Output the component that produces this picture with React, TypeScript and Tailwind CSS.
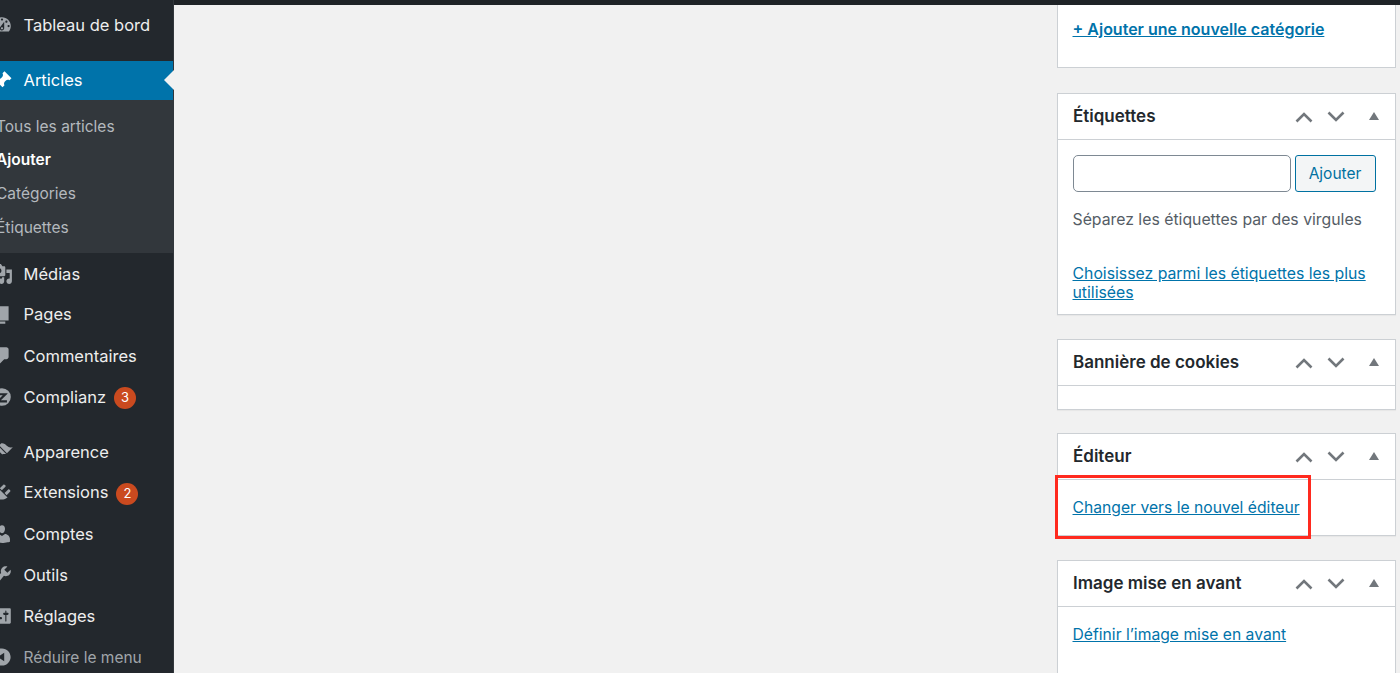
const ICONS: Record<string, string> = {
  dashboard: "M3.76 16h12.48c1.1-1.37 1.76-3.11 1.76-5 0-4.42-3.58-8-8-8s-8 3.58-8 8c0 1.89.66 3.63 1.76 5zM10 4c.55 0 1 .45 1 1s-.45 1-1 1-1-.45-1-1 .45-1 1-1zM6 6c.55 0 1 .45 1 1s-.45 1-1 1-1-.45-1-1 .45-1 1-1zm8 0c.55 0 1 .45 1 1s-.45 1-1 1-1-.45-1-1 .45-1 1-1zm-5.37 5.55L12 7v6c0 1.1-.9 2-2 2s-2-.9-2-2c0-.57.24-1.08.63-1.45zM4 10c.55 0 1 .45 1 1s-.45 1-1 1-1-.45-1-1 .45-1 1-1zm12 0c.55 0 1 .45 1 1s-.45 1-1 1-1-.45-1-1 .45-1 1-1zm-5 3c0-.55-.45-1-1-1s-1 .45-1 1 .45 1 1 1 1-.45 1-1z",
  post: "M10.44 3.02l1.82-1.82 6.36 6.35-1.83 1.82c-1.05-.68-2.48-.57-3.41.36l-.75.75c-.92.93-1.04 2.35-.35 3.41l-1.83 1.82-2.41-2.41-2.8 2.79c-.42.42-3.38 2.71-3.8 2.29s1.86-3.39 2.28-3.81l2.79-2.79L4.1 9.36l1.83-1.82c1.05.69 2.48.57 3.4-.36l.75-.75c.93-.92 1.05-2.35.36-3.41z",
  media: "M13 11V4c0-.55-.45-1-1-1h-1.67L9 1H5L3.67 3H2c-.55 0-1 .45-1 1v7c0 .55.45 1 1 1h10c.55 0 1-.45 1-1zM7 4.5c1.38 0 2.5 1.12 2.5 2.5S8.38 9.5 7 9.5 4.5 8.38 4.5 7 5.62 4.5 7 4.5zM14 6h5v10.5c0 1.38-1.12 2.5-2.5 2.5S14 17.88 14 16.5s1.12-2.5 2.5-2.5c.17 0 .34.02.5.05V9h-3V6zm-4 8.05V13h2v3.5c0 1.38-1.12 2.5-2.5 2.5S7 17.88 7 16.5 8.12 14 9.5 14c.17 0 .34.02.5.05z",
  page: "M6 15V2h10v13H6zm-1 1h8v2H3V5h2v11z",
  comments: "M5 2h9c1.1 0 2 .9 2 2v7c0 1.1-.9 2-2 2h-2l-5 5v-5H5c-1.1 0-2-.9-2-2V4c0-1.1.9-2 2-2z",
  complianz: "M10 2a8 8 0 1 1 0 16a8 8 0 0 1 0-16zM5.5 6.5v2h5.2l-5.2 5v1.5h9v-2H9l6-6v-.5z",
  appearance: "M14.48 11.06L7.41 3.99l1.5-1.5c.5-.56 2.3-.47 3.51.32 1.21.8 1.43 1.28 2.91 2.1 1.18.64 2.45 1.26 4.45.85zm-.71.71L6.7 4.7 4.93 6.47c-.39.39-.39 1.02 0 1.41l1.06 1.06c.39.39.39 1.03 0 1.42-.6.6-1.43 1.11-2.21 1.69-.35.26-.7.53-1.01.84C1.43 13.23.91 14.75 1.4 15.24c.49.49 2.02-.02 3.36-1.36.31-.31.58-.66.84-1.01.58-.78 1.09-1.61 1.69-2.21.39-.39 1.02-.39 1.41 0l1.06 1.06c.39.39 1.02.39 1.41 0z",
  plugins: "M13.11 4.36L9.87 7.6 8 5.73l3.24-3.24c.35-.34 1.05-.2 1.56.32.52.51.66 1.21.31 1.55zm-8 1.77l.91-1.12 9.01 9.01-1.19.84c-.71.71-2.63 1.16-3.82 1.16H6.14L4.9 17.26c-.59.59-1.54.59-2.12 0-.59-.58-.59-1.53 0-2.12l1.24-1.24v-3.88c0-1.13.4-3.19 1.09-3.89zm7.26 3.97l3.24-3.24c.34-.35 1.04-.21 1.55.31.52.51.66 1.21.31 1.55l-3.24 3.25z",
  users: "M10 9.25c-2.27 0-2.73-3.44-2.73-3.44C7 4.02 7.82 2 9.97 2c2.16 0 2.98 2.02 2.71 3.81 0 0-.41 3.44-2.68 3.44zm0 2.57L12.72 10c2.39 0 4.52 2.33 4.52 4.53v2.49s-3.65 1.13-7.24 1.13c-3.65 0-7.24-1.13-7.24-1.13v-2.49c0-2.25 1.94-4.48 4.47-4.48z",
  tools: "M16.68 9.77c-1.34 1.34-3.3 1.67-4.95.99l-5.41 6.52c-.99.99-2.59.99-3.58 0s-.99-2.59 0-3.57l6.52-5.42c-.68-1.65-.35-3.61.99-4.95 1.28-1.28 3.12-1.62 4.72-1.06l-2.89 2.89 2.82 2.82 2.86-2.87c.53 1.58.18 3.39-1.08 4.67zM3.81 16.21c.4.39 1.04.39 1.43 0 .4-.4.4-1.04 0-1.43-.39-.4-1.03-.4-1.43 0-.39.39-.39 1.03 0 1.43z",
  settings: "M18 16V4c0-.55-.45-1-1-1H3c-.55 0-1 .45-1 1v12c0 .55.45 1 1 1h14c.55 0 1-.45 1-1zM8 11h1c.55 0 1 .45 1 1s-.45 1-1 1H8v1.5c0 .28-.22.5-.5.5s-.5-.22-.5-.5V13H6c-.55 0-1-.45-1-1s.45-1 1-1h1V5.5c0-.28.22-.5.5-.5s.5.22.5.5V11zm5-2h-1c-.55 0-1-.45-1-1s.45-1 1-1h1V5.5c0-.28.22-.5.5-.5s.5.22.5.5V7h1c.55 0 1 .45 1 1s-.45 1-1 1h-1v5.5c0 .28-.22.5-.5.5s-.5-.22-.5-.5V9z",
  collapse: "M10 2.16c4.33 0 7.84 3.51 7.84 7.84s-3.51 7.84-7.84 7.84S2.16 14.33 2.16 10 5.71 2.16 10 2.16zm2 11.72V6.12L6.18 9.97z",
};

function Icon({ name }: { name: string }) {
  return (
    <svg viewBox="0 0 20 20" className="w-[22px] h-[22px] -ml-[9px] mr-[10.5px] shrink-0" fill="currentColor" fillRule="evenodd">
      <path d={ICONS[name]} />
    </svg>
  );
}

function Row({ icon, label, badge, extra = "", labelExtra = "" }: { icon: string; label: string; badge?: string; extra?: string; labelExtra?: string }) {
  return (
    <div className={`h-[40px] flex items-center text-[#a0a5aa] ${extra}`}>
      <Icon name={icon} />
      <span className={`text-[#eeeeee] text-[16.5px] ${labelExtra}`}>{label}</span>
      {badge && (
        <span className="ml-[8px] mt-[2px] w-[22px] h-[22px] rounded-full bg-[#ca4a1f] text-white text-[13px] flex items-center justify-center">
          {badge}
        </span>
      )}
    </div>
  );
}

function Controls() {
  return (
    <div className="flex items-center mt-[2px]">
      <svg viewBox="0 0 18 12" className="w-[18px] h-[12px] mr-[14px]" fill="none" stroke="#72777c" strokeWidth="2.6">
        <path d="M1.5 10.5 9 3l7.5 7.5" />
      </svg>
      <svg viewBox="0 0 18 12" className="w-[18px] h-[12px] mr-[24.5px]" fill="none" stroke="#72777c" strokeWidth="2.6">
        <path d="M1.5 1.5 9 9l7.5-7.5" />
      </svg>
      <svg viewBox="0 0 10 8" className="w-[10px] h-[8px] -mt-[3px]" fill="#72777c">
        <path d="M5 0l5 8H0z" />
      </svg>
    </div>
  );
}

function Box({ title, bodyClass, children, className = "" }: { title: string; bodyClass?: string; children?: React.ReactNode; className?: string }) {
  return (
    <section className={`bg-white border border-[#ccd0d4] shadow-[0_1px_1px_rgba(0,0,0,0.04)] ${className}`}>
      <header className="h-[45.5px] border-b border-[#ccd0d4] pl-[15px] pr-[16px] flex items-center justify-between">
        <h2 className="text-[17px] font-semibold text-[#23282d]">{title}</h2>
        <Controls />
      </header>
      <div className={bodyClass}>{children}</div>
    </section>
  );
}

const linkCls = "text-[#0073aa] underline text-[15.7px] leading-[18px]";

export default function App() {
  return (
    <div className="h-[673px] w-[1400px] flex overflow-hidden bg-[#f1f1f1] font-['Inter','Liberation_Sans',sans-serif]">
      <aside className="w-[174px] h-full shrink-0 bg-[#23282d] overflow-hidden border-r border-[#32373c]">
        <div className="h-[50px] flex items-center text-[#a0a5aa]">
          <Icon name="dashboard" />
          <span className="text-[#eeeeee] text-[16.5px]">Tableau de bord</span>
        </div>
        <div className="mt-[11px] h-[39px] bg-[#0073aa] flex items-center text-white">
          <Icon name="post" />
          <span className="text-[16.5px] -mt-[1px]">Articles</span>
        </div>
        <div className="bg-[#32373c] h-[153px] pt-[9px] text-[15.5px] text-[#b4b9be]">
          <div className="h-[34px] flex items-center -ml-[4px] pt-[1px]">Tous les articles</div>
          <div className="h-[34px] flex items-center -ml-[4px] font-semibold text-white">Ajouter</div>
          <div className="h-[34px] flex items-center -ml-[4px]">Catégories</div>
          <div className="h-[34px] flex items-center -ml-[4px]">Étiquettes</div>
        </div>
        <div className="mt-px flex flex-col gap-px">
          <Row icon="media" label="Médias" />
          <Row icon="page" label="Pages" labelExtra="-mt-[2px]" />
          <Row icon="comments" label="Commentaires" />
          <Row icon="complianz" label="Complianz" badge="3" />
          <Row icon="appearance" label="Apparence" extra="mt-[14px]" />
          <Row icon="plugins" label="Extensions" badge="2" labelExtra="-mt-[2px]" />
          <Row icon="users" label="Comptes" />
          <Row icon="tools" label="Outils" />
          <Row icon="settings" label="Réglages" />
          <div className="h-[40px] flex items-center text-[#a0a5aa]">
            <Icon name="collapse" />
            <span className="text-[15.5px] mt-[2px]">Réduire le menu</span>
          </div>
        </div>
      </aside>

      <main className="flex-1 min-w-0 flex flex-col">
        <div className="h-[5px] bg-[#1f2327] shrink-0" />
        <div className="self-end w-[339px] mr-[4px] flex flex-col">
          <section className="h-[63px] bg-white border border-t-0 border-[#ccd0d4] pl-[14.5px] pt-[12px]">
            <a className="text-[#0073aa] underline text-[16px] font-semibold leading-[18px]">+ Ajouter une nouvelle catégorie</a>
          </section>

          <Box title="Étiquettes" className="mt-[25px] h-[222px]" bodyClass="pl-[14.5px] pr-[18px] pt-[15px]">
            <div className="flex gap-[4px]">
              <input className="w-[218px] h-[37px] bg-white border border-[#7e8993] rounded-[5px]" />
              <button className="w-[81px] h-[37px] bg-[#f3f5f6] border border-[#0071a1] rounded-[3px] text-[#0071a1] text-[15.5px] pt-[1px]">Ajouter</button>
            </div>
            <p className="mt-[18px] text-[15.8px] leading-[20px] text-[#555d66]">Séparez les étiquettes par des virgules</p>
            <p className="mt-[34px] leading-[18px]">
              <a className="text-[#0073aa] underline text-[15.8px] leading-[18px]">Choisissez parmi les étiquettes les plus utilisées</a>
            </p>
          </Box>

          <Box title="Bannière de cookies" className="mt-[24px] h-[71px]" />

          <Box title="Éditeur" className="mt-[23px] h-[103px] relative" bodyClass="pl-[14.5px] pt-[18px] leading-[18px]">
            <a className={linkCls}>Changer vers le nouvel éditeur</a>
            <div className="absolute left-[-3px] top-[41px] w-[256px] h-[64px] border-[3px] border-[#ff2a1f]" />
          </Box>

          <Box title="Image mise en avant" className="mt-[24px] h-[140px]" bodyClass="pl-[14.5px] pt-[18px] leading-[18px]">
            <a className={linkCls}>Définir l’image mise en avant</a>
          </Box>
        </div>
      </main>
      <div className="absolute left-[164px] top-[70px] w-0 h-0 border-y-[10px] border-y-transparent border-r-[10px] border-r-[#f1f1f1]" />
    </div>
  );
}
